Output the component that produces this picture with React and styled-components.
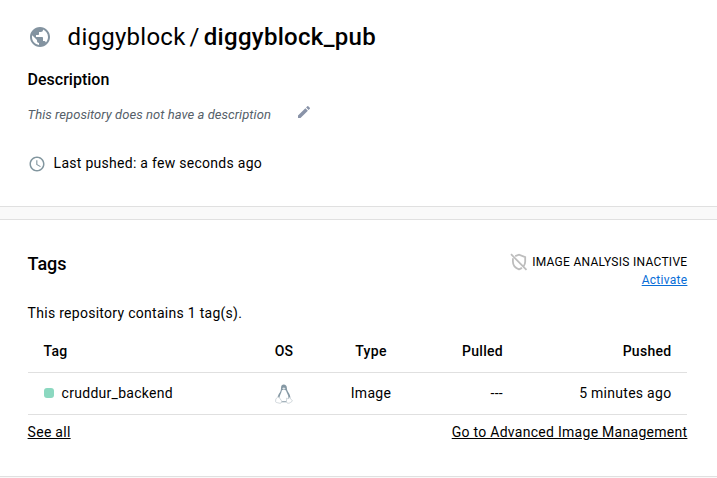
import React from "react";
import styled, { createGlobalStyle } from "styled-components";
import { MdPublic, MdEdit, MdAccessTime } from "react-icons/md";

const GlobalStyle = createGlobalStyle`
  *, *::before, *::after { box-sizing: border-box; }
  body {
    margin: 0;
    background: #f9f9f9;
    color: #000;
    font-family: Roboto, "Liberation Sans", sans-serif;
    font-size: 14px;
    line-height: 20px;
    letter-spacing: 0.28px;
    overflow: hidden;
  }
`;

const Page = styled.main`
  height: 478px;
  display: flex;
  flex-direction: column;
  gap: 12px;
`;

const Panel = styled.section`
  background: #fff;
  border-bottom: 1px solid #e0e0e0;
  padding: 0 29.6px 0 27.6px;
`;

const RepoPanel = styled(Panel)`
  height: 207px;
  padding-top: 20px;
`;

const TagsPanel = styled(Panel)`
  height: 258px;
  border-top: 1px solid #e0e0e0;
  padding-top: 31px;
`;

const TitleRow = styled.div`
  display: flex;
  align-items: center;
  gap: 16px;
  height: 34px;
  svg { width: 24px; height: 24px; color: #8393a0; }
`;

const Title = styled.h1`
  margin: 0;
  font-size: 24px;
  line-height: 34px;
  font-weight: 400;
  letter-spacing: 0.26px;
`;

const RepoName = styled.span`
  font-weight: 500;
  letter-spacing: 0.3px;
`;

const Slash = styled.span`
  margin: 0 4px;
`;

const Subheading = styled.h2`
  margin: 16px 0 0;
  font-size: 16px;
  line-height: 20px;
  font-weight: 500;
  letter-spacing: 0;
`;

const DescriptionRow = styled.div`
  display: flex;
  align-items: center;
  gap: 25px;
  height: 20px;
  margin-top: 15px;
  color: #556069;
  font-size: 13px;
  font-style: italic;
  letter-spacing: 0.05px;
  svg { width: 16px; height: 16px; color: #8993a8; margin-top: -6px; }
`;

const PushedRow = styled.div`
  display: flex;
  align-items: center;
  gap: 8px;
  height: 20px;
  margin-top: 28px;
  svg { width: 18px; height: 18px; color: #82969f; margin-top: 2px; }
`;

const TagsHeader = styled.header`
  display: flex;
  justify-content: space-between;
  height: 40px;
`;

const TagsTitle = styled.h2`
  margin: 0;
  padding-top: 1px;
  font-size: 18px;
  line-height: 24px;
  font-weight: 500;
  letter-spacing: 0;
`;

const Analysis = styled.div`
  display: flex;
  flex-direction: column;
  align-items: flex-end;
  font-size: 12px;
  line-height: 18px;
`;

const AnalysisStatus = styled.div`
  display: flex;
  align-items: center;
  gap: 4px;
  height: 20px;
  padding-top: 2px;
`;

const Link = styled.a`
  color: ${(p) => p.$color || "#000"};
  text-decoration: underline;
`;

const Summary = styled.p`
  margin: 12px 0 0;
`;

const Table = styled.div`
  margin-top: 7px;
`;

const Row = styled.div`
  display: grid;
  grid-template-columns: 228.4px 56px 118px 89px 1fr;
  align-items: center;
  height: ${(p) => (p.$header ? 43 : 42)}px;
  padding-bottom: ${(p) => (p.$header ? 0 : 1)}px;
  border-bottom: 1px solid #e0e0e0;
  font-weight: ${(p) => (p.$header ? 500 : 400)};
`;

const Cell = styled.div`
  display: flex;
  align-items: center;
  justify-content: ${(p) => p.$align || "center"};
  padding: 0 ${(p) => (p.$align ? 16 : 0)}px;
`;

const Status = styled.span`
  width: 10px;
  height: 10px;
  margin-right: 8px;
  border-radius: 3px;
  background: #8bd8c0;
`;

const Footer = styled.footer`
  display: flex;
  justify-content: space-between;
  margin-top: 7px;
`;

const ShieldOff = () => (
  <svg width="18" height="18" viewBox="0 0 18 18" fill="none" stroke="#bdbdbd" strokeWidth="1.8">
    <path d="M5.2 3.1 9 1.7l6.2 2.4v4.5c0 1.8-.6 3.3-1.6 4.7M2.9 5.2v3.4c0 3.8 2.4 6.6 6.1 7.8 1.1-.4 2.1-.9 2.9-1.6" />
    <path d="M1 1.2 16.5 16.8" />
  </svg>
);

const PenguinIcon = styled.svg`
  margin-top: 2px;
`;

const Penguin = () => (
  <PenguinIcon width="18" height="20" viewBox="0 0 18 20">
    <path d="M6 4.2C6 1.7 7.1.6 8.8.6s3.1 1.3 3.1 3.7c0 2.3 1.2 3.4 2.2 5.2.9 1.7 1.6 3.7 1.1 5.6l-2.1 3.2H5.1L2.6 15c-.3-1.8.6-3.8 1.5-5.4C5.3 7.9 6 6.5 6 4.2Z" fill="#8598a4" />
    <path d="M6.9 6.2 9 5.4l2 1c.4 2 2.4 4.3 2.5 7l-2.1 3.8H6.5L4.4 14c0-2.6 2.1-5 2.5-7.8Z" fill="#fff" />
    <path d="m7 4.3 1.8-.7 1.9.7-1.8 1.1Z" fill="#e3e8eb" />
    <path d="M2.5 13.2c1.3-.4 2.2.8 2.9 2 .8 1.1 1.6 1.9 1.2 3-.6 1.5-2 1.1-3.3.7-1.3-.4-2.7-.4-2.7-1.3 0-.8.2-1.6.2-2.4.1-.9 1-1 1.7-2Zm9.2.7c.4 1.2 1.8 1.4 2.8-.4.4.8.9 1.4 1.9 2.1.9.6 1.4 1.3.5 1.9-1.1.7-1.6 1.2-2.6 1.6-1.3.4-2.6 0-2.8-1.5-.1-1.2.1-2.4.2-3.7Z" fill="#fff" stroke="#c9d1d6" strokeWidth=".9" />
  </PenguinIcon>
);

export default function App() {
  return (
    <>
      <GlobalStyle />
      <Page>
        <RepoPanel>
          <TitleRow>
            <MdPublic />
            <Title>diggyblock<Slash>/</Slash><RepoName>diggyblock_pub</RepoName></Title>
          </TitleRow>
          <Subheading>Description</Subheading>
          <DescriptionRow>
            <span>This repository does not have a description</span>
            <MdEdit />
          </DescriptionRow>
          <PushedRow>
            <MdAccessTime />
            <span>Last pushed: a few seconds ago</span>
          </PushedRow>
        </RepoPanel>
        <TagsPanel>
          <TagsHeader>
            <TagsTitle>Tags</TagsTitle>
            <Analysis>
              <AnalysisStatus><ShieldOff /><span>IMAGE ANALYSIS INACTIVE</span></AnalysisStatus>
              <Link $color="#086dd7">Activate</Link>
            </Analysis>
          </TagsHeader>
          <Summary>This repository contains 1 tag(s).</Summary>
          <Table>
            <Row $header>
              <Cell $align="flex-start">Tag</Cell>
              <Cell>OS</Cell>
              <Cell>Type</Cell>
              <Cell $align="flex-end">Pulled</Cell>
              <Cell $align="flex-end">Pushed</Cell>
            </Row>
            <Row>
              <Cell $align="flex-start"><Status />cruddur_backend</Cell>
              <Cell><Penguin /></Cell>
              <Cell>Image</Cell>
              <Cell $align="flex-end">---</Cell>
              <Cell $align="flex-end">5 minutes ago</Cell>
            </Row>
          </Table>
          <Footer>
            <Link>See all</Link>
            <Link>Go to Advanced Image Management</Link>
          </Footer>
        </TagsPanel>
      </Page>
    </>
  );
}
